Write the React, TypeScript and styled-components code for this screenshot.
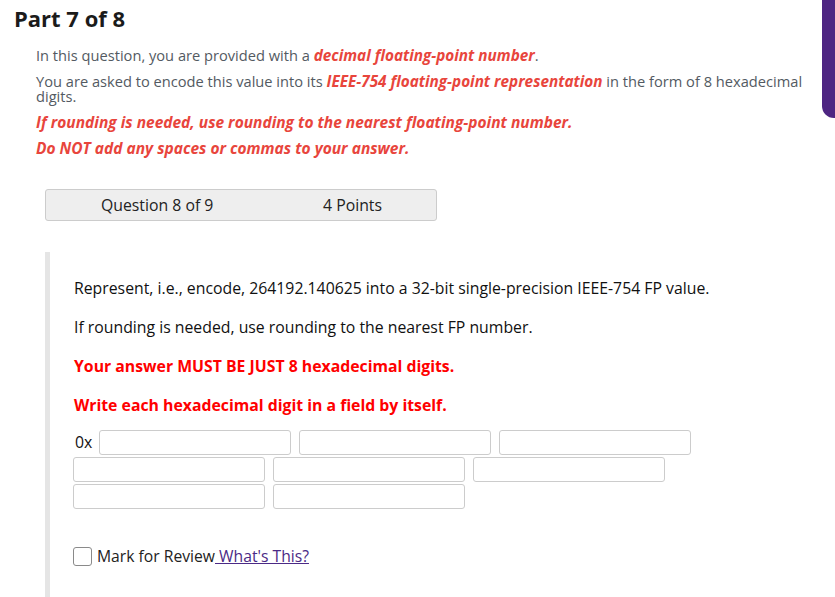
import React from 'react';
import styled, { createGlobalStyle } from 'styled-components';

const GlobalStyle = createGlobalStyle`
  html, body {
    margin: 0;
    padding: 0;
    background: #fff;
  }
  body {
    font-family: 'Open Sans', 'Noto Sans', sans-serif;
    overflow: hidden;
  }
`;

const Page = styled.div`
  position: relative;
  width: 835px;
  height: 597px;
  overflow: hidden;
`;

const SideTab = styled.div`
  position: absolute;
  top: 0;
  right: 0;
  width: 13px;
  height: 118px;
  background: #4e2582;
  border-bottom-left-radius: 12px;
`;

const PartTitle = styled.h2`
  margin: 0;
  padding: 3px 0 0 14px;
  font-size: 22px;
  font-weight: 700;
  line-height: 30px;
  color: #1b1b1b;
`;

const Intro = styled.div`
  padding: 15px 20px 0 36px;
  color: #535a62;
  font-size: 14.65px;
`;

const IntroLine = styled.p`
  margin: 0 0 11px;
  line-height: 15px;
`;

const Hot = styled.em`
  color: #e8453c;
  font-size: 15.3px;
  font-weight: 700;
  font-style: italic;
`;

const Warn = styled(IntroLine)`
  color: #e8453c;
  font-size: 15.5px;
  font-weight: 700;
  font-style: italic;
`;

const Header = styled.div`
  display: flex;
  align-items: center;
  margin: 33px 0 0 45px;
  width: 390px;
  height: 30px;
  background: #eeeeee;
  border: 1px solid #cccccc;
  border-radius: 3px;
  font-size: 15.8px;
  color: #222;
`;

const HeaderCell = styled.span<{ $w: number }>`
  width: ${(p) => p.$w}px;
  padding-left: 55px;
  box-sizing: border-box;
`;

const Body = styled.div`
  margin: 31px 0 0 45px;
  border-left: 5px solid #e5e5e5;
  padding: 26px 0 30px 24px;
  color: #111;
  font-size: 15.8px;
`;

const QLine = styled.p<{ $red?: boolean }>`
  margin: 0 0 18px;
  line-height: 21px;
  color: ${(p) => (p.$red ? '#ff0000' : '#111')};
  font-weight: ${(p) => (p.$red ? 700 : 400)};
`;

const Digits = styled.div`
  display: flex;
  flex-wrap: wrap;
  align-items: center;
  column-gap: 8px;
  row-gap: 2px;
  width: 700px;
  margin: -4px 0 0 -1px;
`;

const Prefix = styled.span`
  font-size: 15.8px;
  line-height: 25px;
  color: #111;
  width: 16px;
  margin-left: 2px;
`;

const DigitInput = styled.input`
  width: 192px;
  height: 25px;
  box-sizing: border-box;
  border: 1px solid #cccccc;
  border-radius: 3px;
  background: #fff;
  outline: none;
  padding: 0 6px;
  font-size: 14px;
  margin: 0;
`;

const Review = styled.label`
  display: flex;
  align-items: center;
  margin: 36px 0 0 -1px;
  font-size: 15.7px;
  color: #222;
`;

const Box = styled.span`
  display: inline-block;
  width: 17px;
  height: 17px;
  border: 1px solid #8a8a8a;
  border-radius: 3px;
  margin-right: 5px;
  background: #fff;
`;

const Link = styled.a`
  color: #4b2a86;
  text-decoration: underline;
  white-space: pre;
`;

export default function App() {
  return (
    <Page>
      <GlobalStyle />
      <SideTab />
      <PartTitle>Part 7 of 8</PartTitle>
      <Intro>
        <IntroLine>
          In this question, you are provided with a <Hot>decimal floating-point number</Hot>.
        </IntroLine>
        <IntroLine>
          You are asked to encode this value into its <Hot>IEEE-754 floating-point representation</Hot> in the
          form of 8 hexadecimal digits.
        </IntroLine>
        <Warn>If rounding is needed, use rounding to the nearest floating-point number.</Warn>
        <Warn>Do NOT add any spaces or commas to your answer.</Warn>
      </Intro>
      <Header>
        <HeaderCell $w={222}>Question 8 of 9</HeaderCell>
        <HeaderCell $w={168}>4 Points</HeaderCell>
      </Header>
      <Body>
        <QLine>Represent, i.e., encode, 264192.140625 into a 32-bit single-precision IEEE-754 FP value.</QLine>
        <QLine>If rounding is needed, use rounding to the nearest FP number.</QLine>
        <QLine $red>Your answer MUST BE JUST 8 hexadecimal digits.</QLine>
        <QLine $red>Write each hexadecimal digit in a field by itself.</QLine>
        <Digits>
          <Prefix>0x</Prefix>
          {Array.from({ length: 8 }).map((_, i) => (
            <DigitInput key={i} type="text" maxLength={1} />
          ))}
        </Digits>
        <Review>
          <Box />
          Mark for Review<Link href="#"> What's This?</Link>
        </Review>
      </Body>
    </Page>
  );
}
